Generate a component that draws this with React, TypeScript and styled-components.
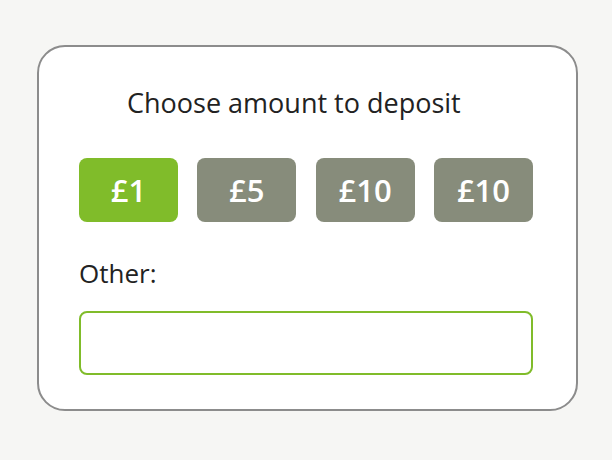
import React, { useState } from 'react';
import styled, { createGlobalStyle } from 'styled-components';

const GlobalStyle = createGlobalStyle`
  html, body {
    margin: 0;
    padding: 0;
    background: #f6f6f4;
  }
  body {
    font-family: "Open Sans", "Liberation Sans", sans-serif;
  }
`;

const Page = styled.div`
  width: 612px;
  height: 460px;
  padding: 45px 0 0 37px;
  box-sizing: border-box;
`;

const Card = styled.div`
  width: 541px;
  height: 366px;
  box-sizing: border-box;
  background: #fff;
  border: 2px solid #8c8c8c;
  border-radius: 28px;
  padding: 0 43px 0 40px;
`;

const Title = styled.h2`
  margin: 0;
  padding: 38px 0 0 48px;
  height: 111px;
  box-sizing: border-box;
  font-size: 27px;
  font-weight: 400;
  color: #222;
  line-height: 36px;
`;

const Amounts = styled.div`
  display: grid;
  grid-template-columns: repeat(4, 99px);
  justify-content: space-between;
`;

const Amount = styled.button<{ $active?: boolean }>`
  height: 64px;
  border: none;
  border-radius: 8px;
  background: ${p => (p.$active ? '#80bc2a' : '#878c7b')};
  color: #fff;
  font-family: inherit;
  font-size: 31px;
  font-weight: 600;
  cursor: pointer;
  padding: 0;
`;

const Label = styled.label`
  display: block;
  margin-top: 34px;
  font-size: 26px;
  line-height: 34px;
  color: #222;
`;

const Input = styled.input`
  display: block;
  margin-top: 21px;
  width: 100%;
  height: 64px;
  box-sizing: border-box;
  border: 2px solid #80bc2a;
  border-radius: 8px;
  outline: none;
  font-family: inherit;
  font-size: 22px;
  padding: 0 14px;
`;

const amounts = ['£1', '£5', '£10', '£10'];

export default function App() {
  const [selected, setSelected] = useState(0);
  return (
    <Page>
      <GlobalStyle />
      <Card>
        <Title>Choose amount to deposit</Title>
        <Amounts>
          {amounts.map((a, i) => (
            <Amount key={i} $active={i === selected} onClick={() => setSelected(i)}>
              {a}
            </Amount>
          ))}
        </Amounts>
        <Label htmlFor="other">Other:</Label>
        <Input id="other" type="text" />
      </Card>
    </Page>
  );
}
